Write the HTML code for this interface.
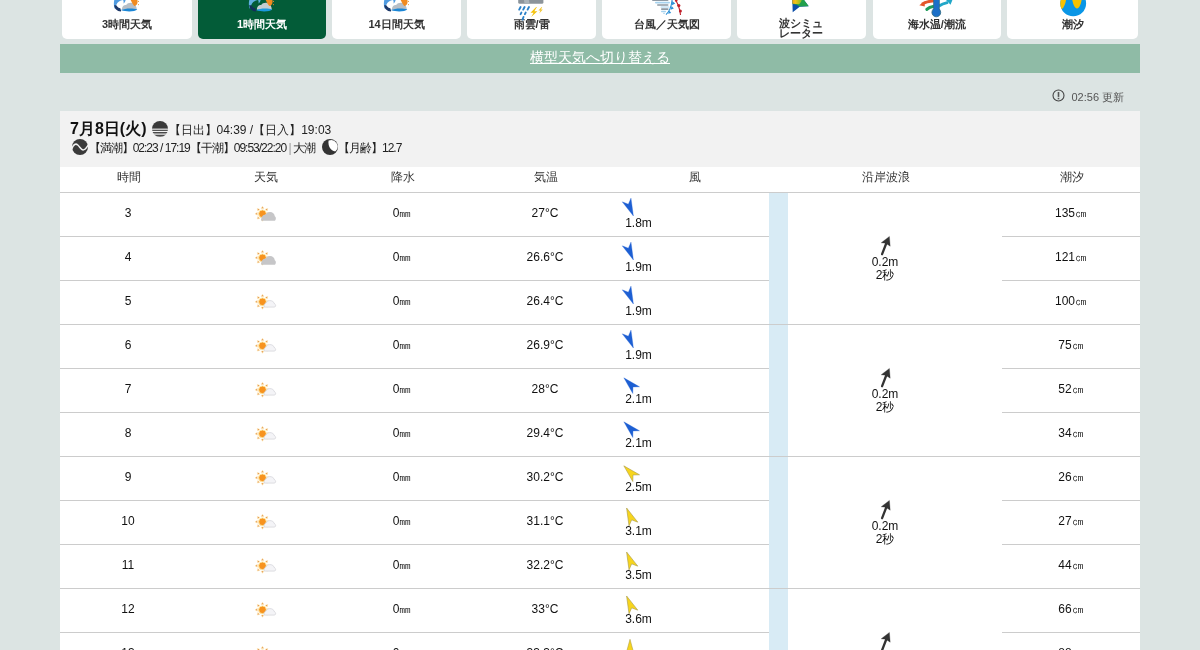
<!DOCTYPE html>
<html><head><meta charset="utf-8">
<style>
*{margin:0;padding:0;box-sizing:border-box}
html,body{width:1200px;height:650px;overflow:hidden;background:#dce4e3;font-family:"Liberation Sans",sans-serif;color:#222}
.abs{position:absolute}
#tabs{position:absolute;left:0;top:-20px;width:1200px;height:59px}
.tab{position:absolute;top:0;height:59px;background:#fff;border-radius:0 0 5px 5px;text-align:center}
.tab.on{background:#035c38}
.tab .lb{position:absolute;left:0;right:0;top:37px;font-size:11px;font-weight:bold;color:#333;line-height:14px}
.tab.on .lb{color:#fff}
#bar{position:absolute;left:60px;top:44px;width:1080px;height:29px;background:#8fbba6;text-align:center}
#bar a{color:#fff;font-size:14px;line-height:27.6px;text-decoration:underline;text-underline-offset:1px}
#upd{position:absolute;left:1071.5px;top:88.5px;font-size:11px;color:#555;line-height:16px;white-space:nowrap}
#panel{position:absolute;left:60px;top:111px;width:1080px;height:56px;background:#f2f2f2}
#tbl{position:absolute;left:60px;top:167px;width:1080px;height:500px;background:#fff}
.hd{position:absolute;height:20px;line-height:20px;font-size:12px;color:#333;text-align:center}
.hl{position:absolute;height:1px;background:#ccc}
.c{position:absolute;text-align:center;font-size:12px;color:#111;line-height:14px;white-space:nowrap}
.t1{font-size:12px;color:#222;line-height:16px;white-space:nowrap}
.t2{font-size:12px;color:#222;line-height:16px;white-space:nowrap;letter-spacing:-1px}
</style></head><body><div id="wrap" style="position:absolute;left:0;top:0;width:1200px;height:650px;overflow:hidden;will-change:transform">
<div id="tabs">
 <div class="tab" style="left:62px;width:130px"><div class="lb">3時間天気</div></div>
 <div class="tab on" style="left:198px;width:128px"><div class="lb">1時間天気</div></div>
 <div class="tab" style="left:332px;width:129px"><div class="lb">14日間天気</div></div>
 <div class="tab" style="left:467.25px;width:128.75px"><div class="lb">雨雲/雷</div></div>
 <div class="tab" style="left:602.25px;width:128.75px"><div class="lb">台風／天気図</div></div>
 <div class="tab" style="left:737.25px;width:128.75px"><div class="lb" style="line-height:10.5px;top:37.5px;left:-2px">波シミュ<br>レーター</div></div>
 <div class="tab" style="left:872.5px;width:128.5px"><div class="lb">海水温/潮流</div></div>
 <div class="tab" style="left:1007.25px;width:130.75px"><div class="lb">潮汐</div></div>
</div>

<svg class="abs" style="left:105px;top:0" width="36" height="13" viewBox="0 0 36 13">
 <path d="M9.5 -1 L20.8 -1 C20.5 1.5 19.5 3 18.5 3.5 C18.8 1.5 18.5 0.5 18 0 C15 0.5 12.5 2 11.5 4.5 C10.8 6 10.8 7 11.2 8 L9.6 8.5 C8.6 6 8.6 2.5 9.5 -1 Z" fill="#4f9be0"/>
 <path d="M9.3 5 C9.3 8.8 12 11.3 15.9 11.4 L16.2 9.6 C13.8 9.2 12 8 11.4 5.5 Z" fill="#1e3a6a"/>
 <path d="M10 6 C10.5 8.5 12.5 10 15 10.5 L15.5 8.2 C13.8 8 12.5 7.2 11.8 5.8 Z" fill="#1e3a6a"/>
 <path d="M17 9.8 C16.6 7 18.6 4.6 21.2 5 C22.2 3 25 2.4 27.5 2.9 C30 3.4 31.6 6 31.9 9.8 Z" fill="#b7bfc7"/>
 <path d="M25.2 -1 L32.5 -1 L32.5 2.8 C32.2 4.8 30.8 5.9 29.2 6 C28 4.2 26.5 2.2 25.2 -1 Z" fill="#f08a1f"/>
 <circle cx="33.4" cy="1.4" r="0.55" fill="#e8902a"/><circle cx="33.4" cy="4.6" r="0.55" fill="#e8902a"/>
 <path d="M16 10.1 C20 8.1 28 7.8 32.3 9.5 C30.2 11.6 22 12.4 16 10.1 Z" fill="#1b86d6"/>
</svg>
<svg class="abs" style="left:240px;top:0" width="36" height="13" viewBox="0 0 36 13">
 <path d="M9.5 -1 L20.8 -1 C20.5 1.5 19.5 3 18.5 3.5 C18.8 1.5 18.5 0.5 18 0 C15 0.5 12.5 2 11.5 4.5 C10.8 6 10.8 7 11.2 8 L9.6 8.5 C8.6 6 8.6 2.5 9.5 -1 Z" fill="#5fb0e0"/>
 <path d="M9.3 5 C9.3 8.8 12 11.3 15.9 11.4 L16.2 9.6 C13.8 9.2 12 8 11.4 5.5 Z" fill="#12305a"/>
 <path d="M10 6 C10.5 8.5 12.5 10 15 10.5 L15.5 8.2 C13.8 8 12.5 7.2 11.8 5.8 Z" fill="#12305a"/>
 <path d="M17 9.8 C16.6 7 18.6 4.6 21.2 5 C22.2 3 25 2.4 27.5 2.9 C30 3.4 31.6 6 31.9 9.8 Z" fill="#c4ccd0"/>
 <path d="M25.2 -1 L32.5 -1 L32.5 2.8 C32.2 4.8 30.8 5.9 29.2 6 C28 4.2 26.5 2.2 25.2 -1 Z" fill="#f08a1f"/>
 <circle cx="33.4" cy="1.4" r="0.55" fill="#e8902a"/><circle cx="33.4" cy="4.6" r="0.55" fill="#e8902a"/>
 <path d="M16 10.1 C20 8.1 28 7.8 32.3 9.5 C30.2 11.6 22 12.4 16 10.1 Z" fill="#1c9ae0"/>
</svg>
<svg class="abs" style="left:374.5px;top:0" width="36" height="13" viewBox="0 0 36 13">
 <path d="M9.5 -1 L20.8 -1 C20.5 1.5 19.5 3 18.5 3.5 C18.8 1.5 18.5 0.5 18 0 C15 0.5 12.5 2 11.5 4.5 C10.8 6 10.8 7 11.2 8 L9.6 8.5 C8.6 6 8.6 2.5 9.5 -1 Z" fill="#4f9be0"/>
 <path d="M9.3 5 C9.3 8.8 12 11.3 15.9 11.4 L16.2 9.6 C13.8 9.2 12 8 11.4 5.5 Z" fill="#1e3a6a"/>
 <path d="M10 6 C10.5 8.5 12.5 10 15 10.5 L15.5 8.2 C13.8 8 12.5 7.2 11.8 5.8 Z" fill="#1e3a6a"/>
 <path d="M17 9.8 C16.6 7 18.6 4.6 21.2 5 C22.2 3 25 2.4 27.5 2.9 C30 3.4 31.6 6 31.9 9.8 Z" fill="#b7bfc7"/>
 <path d="M25.2 -1 L32.5 -1 L32.5 2.8 C32.2 4.8 30.8 5.9 29.2 6 C28 4.2 26.5 2.2 25.2 -1 Z" fill="#f08a1f"/>
 <circle cx="33.4" cy="1.4" r="0.55" fill="#e8902a"/><circle cx="33.4" cy="4.6" r="0.55" fill="#e8902a"/>
 <path d="M16 10.1 C20 8.1 28 7.8 32.3 9.5 C30.2 11.6 22 12.4 16 10.1 Z" fill="#1b86d6"/>
</svg>
<svg class="abs" style="left:516px;top:0" width="30" height="21" viewBox="0 0 30 21">
 <rect x="2.2" y="-3" width="25.2" height="6.7" rx="1.5" fill="#8c949a"/>
 <path d="M7.5 -3 L12.5 -3 L13.5 3.7 L8.5 3.7Z" fill="#aab3b9"/>
 <g stroke="#2a80c8" stroke-width="1.9" stroke-linecap="round">
  <path d="M3.2 9.6 L4.6 7"/><path d="M7.2 9.6 L8.6 7"/><path d="M11.6 9.6 L13 7"/>
  <path d="M4.6 14.2 L5.4 12.6"/><path d="M8.9 14.2 L9.7 12.6"/><path d="M6.5 19.6 L7.5 17"/>
 </g>
 <path d="M20.2 7 L14.5 12.8 L17.6 12.8 L15.2 17 L21.4 11.2 L18.3 11.2 L20.9 7Z" fill="#f5c20a"/>
 <path d="M25.6 7 L22.4 10.6 L24.4 10.6 L23.2 13.4 L26.8 9.4 L25 9.4 L26.2 7Z" fill="#f0c430"/>
</svg>
<svg class="abs" style="left:650px;top:0" width="36" height="17" viewBox="0 0 36 17">
 <g fill="#8e99a3"><rect x="2" y="-1" width="16.5" height="2.1" rx="1"/><rect x="7" y="4.2" width="11.5" height="1.6" rx="0.8"/><rect x="11" y="8.3" width="7.5" height="1.7" rx="0.8"/></g>
 <g fill="#a6d2ee"><rect x="5" y="1.7" width="15" height="1.8" rx="0.9"/><rect x="10.5" y="6.4" width="9" height="1.2" rx="0.6"/><rect x="11" y="10.8" width="5" height="1.5" rx="0.7"/><rect x="13" y="12.8" width="2" height="1" rx="0.5"/></g>
 <path d="M16 14.6 C19 12 21.5 7 22.2 -1" stroke="#2a8fd6" stroke-width="1.1" fill="none"/>
 <g fill="#2a8fd6"><path d="M22.2 1 L25.2 3.4 L22 5.2Z"/><path d="M21.6 6 L23.8 8.4 L20.6 9.8Z"/><path d="M19.5 10.8 L21.2 13 L18 13.8Z"/></g>
 <path d="M25 -1 C27.5 3 30 9 30.5 15" stroke="#c0202a" stroke-width="1.1" fill="none"/>
 <g fill="#c0202a"><circle cx="28.8" cy="5.6" r="1.6"/><circle cx="30.4" cy="11" r="1.5"/><circle cx="26.2" cy="0.5" r="1.3"/></g>
</svg>

<svg class="abs" style="left:790px;top:0" width="22" height="15" viewBox="0 0 22 15">
 <defs><linearGradient id="wg" x1="0" y1="0" x2="1" y2="0"><stop offset="0" stop-color="#f0821e"/><stop offset="0.45" stop-color="#f2c416"/><stop offset="1" stop-color="#7cba2a"/></linearGradient>
 <clipPath id="wc"><path d="M2.3 -1 L13.3 -1 L18.7 6.3 L9.7 6.7 L2.7 12.3 Z"/></clipPath></defs>
 <g clip-path="url(#wc)">
  <rect x="0" y="-2" width="22" height="16" fill="#0c4ea8"/>
  <path d="M0 -2 L22 -2 L22 6.5 L9.7 6.7 C7 4.5 4 4 0 4 Z" fill="#22a04c"/>
  <path d="M0 -2 L12 -2 C12 1 10.5 3 9 4.2 C6 3.6 3 3.5 0 3.8 Z" fill="url(#wg)"/>
 </g>
</svg>
<svg class="abs" style="left:910px;top:0" width="46" height="18" viewBox="0 0 46 18">
 <path d="M12 4.2 C15 2.2 19 1.2 24 0.8" stroke="#e4562a" stroke-width="3" fill="none"/>
 <path d="M9.3 5.2 L14.5 1.2 L14.8 6.6 Z" fill="#e4562a"/>
 <path d="M16.8 9.4 C18.5 7.6 21 6.6 24 6.2" stroke="#1e9c5a" stroke-width="3" fill="none" stroke-linecap="round"/>
 <path d="M29 6 C32 4 35 3.2 38 2.4" stroke="#22a7c8" stroke-width="3" fill="none"/>
 <path d="M42.6 -0.5 L40.5 4.8 L36 0 Z" fill="#22a7c8"/>
 <rect x="23.6" y="-3" width="5.8" height="14" rx="2.5" fill="#1b6fc8" stroke="#2e6a80" stroke-width="0.7"/>
 <circle cx="26.3" cy="12.4" r="4.4" fill="#1b6fc8" stroke="#2e6a80" stroke-width="0.8"/>
 <rect x="24.4" y="-3" width="4.2" height="13" fill="#1b6fc8"/>
</svg>
<svg class="abs" style="left:1058px;top:0" width="30" height="18" viewBox="0 0 30 18">
 <defs><clipPath id="tc"><circle cx="15.2" cy="3.4" r="12.9"/></clipPath></defs>
 <g clip-path="url(#tc)">
  <rect x="0" y="-10" width="30" height="30" fill="#0a96e6"/>
  <path d="M0 -2 L8.5 -2 C7.5 3 6.5 7 4 9 L0 9Z" fill="#f6c200"/>
  <path d="M13.8 -2 L24 -2 C23 4 21.5 8.5 19 8.5 C16.5 8.5 15 4 13.8 -2Z" fill="#f6c200"/>
 </g>
</svg>
<div id="bar"><a>横型天気へ切り替える</a></div>
<svg class="abs" style="left:1051.5px;top:88.5px" width="13" height="13" viewBox="0 0 13 13"><circle cx="6.5" cy="6.5" r="5.5" fill="none" stroke="#444" stroke-width="1.1"/><rect x="5.7" y="3" width="1.6" height="4.9" fill="#555"/><rect x="5.7" y="8.8" width="1.6" height="1.5" fill="#555"/></svg><div id="upd">02:56 更新</div>
<div id="panel">
 <div class="abs" style="left:10px;top:7.8px;font-size:16px;font-weight:bold;color:#111;line-height:20px">7月8日(火)</div>
 <svg class="abs" style="left:92px;top:10.2px" width="16" height="16" viewBox="0 0 16 16"><defs><clipPath id="sc"><circle cx="8" cy="8" r="8"/></clipPath></defs><g clip-path="url(#sc)" fill="#3a3a3a"><rect x="0" y="0" width="16" height="7.6"/><rect x="0" y="8.7" width="16" height="1.3" fill="#555"/><rect x="0" y="11" width="16" height="1.5" fill="#4a4a4a"/><rect x="0" y="13.7" width="16" height="2" fill="#4a4a4a"/></g></svg>
 <div class="abs t1" style="left:108.5px;top:10.5px">【日出】04:39 /【日入】19:03</div>
 <svg class="abs" style="left:12px;top:27.8px" width="16" height="16" viewBox="0 0 16 16"><circle cx="8" cy="8" r="8" fill="#3a3a3a"/><path d="M-0.5 10.5 C1.5 5 3.8 4.2 5.8 6 C7.8 7.8 9 10.8 11 10.9 C13 11 14.5 9 16.5 5.6" stroke="#f2f2f2" stroke-width="1.5" fill="none"/></svg>
 <div class="abs t2" style="left:28.7px;top:29.2px">【満潮】02:23 / 17:19【干潮】09:53/22:20 <span style="color:#999">|</span> 大潮</div>
 <svg class="abs" style="left:262px;top:27.5px" width="16" height="16" viewBox="0 0 16 16"><circle cx="8" cy="8" r="8" fill="#333"/><path d="M6.6 1.45 A6.6 6.6 0 0 1 13.6 12.3 C10 12.4 5.6 8.8 6.6 1.45 Z" fill="#fff"/></svg>
 <div class="abs t2" style="left:278px;top:29.2px">【月齢】12.7</div>
</div>
<div id="tbl"></div>
<div class="hd" style="left:78.5px;width:100px;top:166.7px">時間</div>
<div class="hd" style="left:215.5px;width:100px;top:166.7px">天気</div>
<div class="hd" style="left:352.5px;width:100px;top:166.7px">降水</div>
<div class="hd" style="left:495.5px;width:100px;top:166.7px">気温</div>
<div class="hd" style="left:644.5px;width:100px;top:166.7px">風</div>
<div class="hd" style="left:835.5px;width:100px;top:166.7px">沿岸波浪</div>
<div class="hd" style="left:1021.5px;width:100px;top:166.7px">潮汐</div>
<div class="abs" style="left:769px;top:192px;width:19px;height:458px;background:#d8ebf5"></div>
<div class="hl" style="left:60px;width:1080px;top:192px"></div>
<div class="hl" style="left:60px;width:709px;top:236px"></div>
<div class="hl" style="left:769px;width:19px;top:236px;background:transparent"></div>
<div class="hl" style="left:1002px;width:138px;top:236px"></div>
<div class="c" style="left:88px;width:80px;top:206px">3</div>
<svg class="abs" style="left:252px;top:202px" width="28" height="24" viewBox="0 0 28 24"><g fill="#e0883a" stroke="#ffeec0" stroke-width="0.6" stroke-linejoin="round"><path d="M10.50 4.30 L11.85 6.60 L9.15 6.60Z"/><path d="M15.80 6.50 L15.13 9.08 L13.22 7.17Z"/><path d="M5.20 6.50 L7.78 7.17 L5.87 9.08Z"/><path d="M3.00 11.80 L5.30 10.45 L5.30 13.15Z"/><path d="M5.20 17.10 L5.87 14.52 L7.78 16.43Z"/><path d="M10.50 19.30 L9.15 17.00 L11.85 17.00Z"/><path d="M18.00 11.80 L15.70 13.15 L15.70 10.45Z"/><path d="M15.80 17.10 L13.22 16.43 L15.13 14.52Z"/></g><circle cx="10.5" cy="11.8" r="3.9" fill="#f7931e" stroke="#ffe8a0" stroke-width="1"/><path d="M9.2 18.8 L22.2 18.8 C24.2 18.8 24.4 15 22.8 14.2 C22.6 11.5 20.5 9.8 17.8 9.9 C15.6 10 14.2 11.2 13.4 12.6 C11 12.8 9 15 9.2 18.8 Z" fill="#c6c6c8"/></svg>
<div class="c" style="left:362px;width:80px;top:206px">0㎜</div>
<div class="c" style="left:505px;width:80px;top:206px">27°C</div>
<svg class="abs" style="left:618.9px;top:196.6px" width="22" height="22" viewBox="-11 -11 22 22"><path d="M0 -8.7 L4.75 8.7 L0 4.2 L-4.75 8.7 Z" transform="rotate(157)" fill="#1d5fd3" stroke="#1d5fd3" stroke-width="0.3" stroke-linejoin="round"/></svg>
<div class="c" style="left:619.5px;width:38px;top:215.8px">1.8m</div>
<div class="c" style="left:1031px;width:80px;top:206px">135㎝</div>
<div class="hl" style="left:60px;width:709px;top:280px"></div>
<div class="hl" style="left:769px;width:19px;top:280px;background:transparent"></div>
<div class="hl" style="left:1002px;width:138px;top:280px"></div>
<div class="c" style="left:88px;width:80px;top:250px">4</div>
<svg class="abs" style="left:252px;top:246px" width="28" height="24" viewBox="0 0 28 24"><g fill="#e0883a" stroke="#ffeec0" stroke-width="0.6" stroke-linejoin="round"><path d="M10.50 4.30 L11.85 6.60 L9.15 6.60Z"/><path d="M15.80 6.50 L15.13 9.08 L13.22 7.17Z"/><path d="M5.20 6.50 L7.78 7.17 L5.87 9.08Z"/><path d="M3.00 11.80 L5.30 10.45 L5.30 13.15Z"/><path d="M5.20 17.10 L5.87 14.52 L7.78 16.43Z"/><path d="M10.50 19.30 L9.15 17.00 L11.85 17.00Z"/><path d="M18.00 11.80 L15.70 13.15 L15.70 10.45Z"/><path d="M15.80 17.10 L13.22 16.43 L15.13 14.52Z"/></g><circle cx="10.5" cy="11.8" r="3.9" fill="#f7931e" stroke="#ffe8a0" stroke-width="1"/><path d="M9.2 18.8 L22.2 18.8 C24.2 18.8 24.4 15 22.8 14.2 C22.6 11.5 20.5 9.8 17.8 9.9 C15.6 10 14.2 11.2 13.4 12.6 C11 12.8 9 15 9.2 18.8 Z" fill="#c6c6c8"/></svg>
<div class="c" style="left:362px;width:80px;top:250px">0㎜</div>
<div class="c" style="left:505px;width:80px;top:250px">26.6°C</div>
<svg class="abs" style="left:618.9px;top:240.6px" width="22" height="22" viewBox="-11 -11 22 22"><path d="M0 -8.7 L4.75 8.7 L0 4.2 L-4.75 8.7 Z" transform="rotate(157)" fill="#1d5fd3" stroke="#1d5fd3" stroke-width="0.3" stroke-linejoin="round"/></svg>
<div class="c" style="left:619.5px;width:38px;top:259.8px">1.9m</div>
<div class="c" style="left:1031px;width:80px;top:250px">121㎝</div>
<div class="hl" style="left:60px;width:1080px;top:324px"></div>
<div class="c" style="left:88px;width:80px;top:294px">5</div>
<svg class="abs" style="left:252px;top:290px" width="28" height="24" viewBox="0 0 28 24"><g fill="#e0883a" stroke="#ffeec0" stroke-width="0.6" stroke-linejoin="round"><path d="M10.50 4.30 L11.85 6.60 L9.15 6.60Z"/><path d="M15.80 6.50 L15.13 9.08 L13.22 7.17Z"/><path d="M5.20 6.50 L7.78 7.17 L5.87 9.08Z"/><path d="M3.00 11.80 L5.30 10.45 L5.30 13.15Z"/><path d="M5.20 17.10 L5.87 14.52 L7.78 16.43Z"/><path d="M10.50 19.30 L9.15 17.00 L11.85 17.00Z"/><path d="M18.00 11.80 L15.70 13.15 L15.70 10.45Z"/><path d="M15.80 17.10 L13.22 16.43 L15.13 14.52Z"/></g><circle cx="10.5" cy="11.8" r="3.9" fill="#f7931e" stroke="#ffe8a0" stroke-width="1"/><path d="M12.2 17.1 L22.2 17.1 C24 17.1 24.2 14.5 22.6 14 C22 11.9 20 10.5 17.8 10.6 C15.8 10.7 14.6 11.7 14 13 C12.5 13.4 11.8 15 12.2 17.1 Z" fill="#f4f4f7" stroke="#cdcdd3" stroke-width="0.65"/></svg>
<div class="c" style="left:362px;width:80px;top:294px">0㎜</div>
<div class="c" style="left:505px;width:80px;top:294px">26.4°C</div>
<svg class="abs" style="left:618.9px;top:284.6px" width="22" height="22" viewBox="-11 -11 22 22"><path d="M0 -8.7 L4.75 8.7 L0 4.2 L-4.75 8.7 Z" transform="rotate(157)" fill="#1d5fd3" stroke="#1d5fd3" stroke-width="0.3" stroke-linejoin="round"/></svg>
<div class="c" style="left:619.5px;width:38px;top:303.8px">1.9m</div>
<div class="c" style="left:1031px;width:80px;top:294px">100㎝</div>
<div class="hl" style="left:60px;width:709px;top:368px"></div>
<div class="hl" style="left:769px;width:19px;top:368px;background:transparent"></div>
<div class="hl" style="left:1002px;width:138px;top:368px"></div>
<div class="c" style="left:88px;width:80px;top:338px">6</div>
<svg class="abs" style="left:252px;top:334px" width="28" height="24" viewBox="0 0 28 24"><g fill="#e0883a" stroke="#ffeec0" stroke-width="0.6" stroke-linejoin="round"><path d="M10.50 4.30 L11.85 6.60 L9.15 6.60Z"/><path d="M15.80 6.50 L15.13 9.08 L13.22 7.17Z"/><path d="M5.20 6.50 L7.78 7.17 L5.87 9.08Z"/><path d="M3.00 11.80 L5.30 10.45 L5.30 13.15Z"/><path d="M5.20 17.10 L5.87 14.52 L7.78 16.43Z"/><path d="M10.50 19.30 L9.15 17.00 L11.85 17.00Z"/><path d="M18.00 11.80 L15.70 13.15 L15.70 10.45Z"/><path d="M15.80 17.10 L13.22 16.43 L15.13 14.52Z"/></g><circle cx="10.5" cy="11.8" r="3.9" fill="#f7931e" stroke="#ffe8a0" stroke-width="1"/><path d="M12.2 17.1 L22.2 17.1 C24 17.1 24.2 14.5 22.6 14 C22 11.9 20 10.5 17.8 10.6 C15.8 10.7 14.6 11.7 14 13 C12.5 13.4 11.8 15 12.2 17.1 Z" fill="#f4f4f7" stroke="#cdcdd3" stroke-width="0.65"/></svg>
<div class="c" style="left:362px;width:80px;top:338px">0㎜</div>
<div class="c" style="left:505px;width:80px;top:338px">26.9°C</div>
<svg class="abs" style="left:618.9px;top:328.6px" width="22" height="22" viewBox="-11 -11 22 22"><path d="M0 -8.7 L4.75 8.7 L0 4.2 L-4.75 8.7 Z" transform="rotate(157)" fill="#1d5fd3" stroke="#1d5fd3" stroke-width="0.3" stroke-linejoin="round"/></svg>
<div class="c" style="left:619.5px;width:38px;top:347.8px">1.9m</div>
<div class="c" style="left:1031px;width:80px;top:338px">75㎝</div>
<div class="hl" style="left:60px;width:709px;top:412px"></div>
<div class="hl" style="left:769px;width:19px;top:412px;background:transparent"></div>
<div class="hl" style="left:1002px;width:138px;top:412px"></div>
<div class="c" style="left:88px;width:80px;top:382px">7</div>
<svg class="abs" style="left:252px;top:378px" width="28" height="24" viewBox="0 0 28 24"><g fill="#e0883a" stroke="#ffeec0" stroke-width="0.6" stroke-linejoin="round"><path d="M10.50 4.30 L11.85 6.60 L9.15 6.60Z"/><path d="M15.80 6.50 L15.13 9.08 L13.22 7.17Z"/><path d="M5.20 6.50 L7.78 7.17 L5.87 9.08Z"/><path d="M3.00 11.80 L5.30 10.45 L5.30 13.15Z"/><path d="M5.20 17.10 L5.87 14.52 L7.78 16.43Z"/><path d="M10.50 19.30 L9.15 17.00 L11.85 17.00Z"/><path d="M18.00 11.80 L15.70 13.15 L15.70 10.45Z"/><path d="M15.80 17.10 L13.22 16.43 L15.13 14.52Z"/></g><circle cx="10.5" cy="11.8" r="3.9" fill="#f7931e" stroke="#ffe8a0" stroke-width="1"/><path d="M12.2 17.1 L22.2 17.1 C24 17.1 24.2 14.5 22.6 14 C22 11.9 20 10.5 17.8 10.6 C15.8 10.7 14.6 11.7 14 13 C12.5 13.4 11.8 15 12.2 17.1 Z" fill="#f4f4f7" stroke="#cdcdd3" stroke-width="0.65"/></svg>
<div class="c" style="left:362px;width:80px;top:382px">0㎜</div>
<div class="c" style="left:505px;width:80px;top:382px">28°C</div>
<svg class="abs" style="left:618.9px;top:372.6px" width="22" height="22" viewBox="-11 -11 22 22"><path d="M0 -8.7 L4.75 8.7 L0 4.2 L-4.75 8.7 Z" transform="rotate(-45)" fill="#1d5fd3" stroke="#1d5fd3" stroke-width="0.3" stroke-linejoin="round"/></svg>
<div class="c" style="left:619.5px;width:38px;top:391.8px">2.1m</div>
<div class="c" style="left:1031px;width:80px;top:382px">52㎝</div>
<div class="hl" style="left:60px;width:1080px;top:456px"></div>
<div class="c" style="left:88px;width:80px;top:426px">8</div>
<svg class="abs" style="left:252px;top:422px" width="28" height="24" viewBox="0 0 28 24"><g fill="#e0883a" stroke="#ffeec0" stroke-width="0.6" stroke-linejoin="round"><path d="M10.50 4.30 L11.85 6.60 L9.15 6.60Z"/><path d="M15.80 6.50 L15.13 9.08 L13.22 7.17Z"/><path d="M5.20 6.50 L7.78 7.17 L5.87 9.08Z"/><path d="M3.00 11.80 L5.30 10.45 L5.30 13.15Z"/><path d="M5.20 17.10 L5.87 14.52 L7.78 16.43Z"/><path d="M10.50 19.30 L9.15 17.00 L11.85 17.00Z"/><path d="M18.00 11.80 L15.70 13.15 L15.70 10.45Z"/><path d="M15.80 17.10 L13.22 16.43 L15.13 14.52Z"/></g><circle cx="10.5" cy="11.8" r="3.9" fill="#f7931e" stroke="#ffe8a0" stroke-width="1"/><path d="M12.2 17.1 L22.2 17.1 C24 17.1 24.2 14.5 22.6 14 C22 11.9 20 10.5 17.8 10.6 C15.8 10.7 14.6 11.7 14 13 C12.5 13.4 11.8 15 12.2 17.1 Z" fill="#f4f4f7" stroke="#cdcdd3" stroke-width="0.65"/></svg>
<div class="c" style="left:362px;width:80px;top:426px">0㎜</div>
<div class="c" style="left:505px;width:80px;top:426px">29.4°C</div>
<svg class="abs" style="left:618.9px;top:416.6px" width="22" height="22" viewBox="-11 -11 22 22"><path d="M0 -8.7 L4.75 8.7 L0 4.2 L-4.75 8.7 Z" transform="rotate(-45)" fill="#1d5fd3" stroke="#1d5fd3" stroke-width="0.3" stroke-linejoin="round"/></svg>
<div class="c" style="left:619.5px;width:38px;top:435.8px">2.1m</div>
<div class="c" style="left:1031px;width:80px;top:426px">34㎝</div>
<div class="hl" style="left:60px;width:709px;top:500px"></div>
<div class="hl" style="left:769px;width:19px;top:500px;background:transparent"></div>
<div class="hl" style="left:1002px;width:138px;top:500px"></div>
<div class="c" style="left:88px;width:80px;top:470px">9</div>
<svg class="abs" style="left:252px;top:466px" width="28" height="24" viewBox="0 0 28 24"><g fill="#e0883a" stroke="#ffeec0" stroke-width="0.6" stroke-linejoin="round"><path d="M10.50 4.30 L11.85 6.60 L9.15 6.60Z"/><path d="M15.80 6.50 L15.13 9.08 L13.22 7.17Z"/><path d="M5.20 6.50 L7.78 7.17 L5.87 9.08Z"/><path d="M3.00 11.80 L5.30 10.45 L5.30 13.15Z"/><path d="M5.20 17.10 L5.87 14.52 L7.78 16.43Z"/><path d="M10.50 19.30 L9.15 17.00 L11.85 17.00Z"/><path d="M18.00 11.80 L15.70 13.15 L15.70 10.45Z"/><path d="M15.80 17.10 L13.22 16.43 L15.13 14.52Z"/></g><circle cx="10.5" cy="11.8" r="3.9" fill="#f7931e" stroke="#ffe8a0" stroke-width="1"/><path d="M12.2 17.1 L22.2 17.1 C24 17.1 24.2 14.5 22.6 14 C22 11.9 20 10.5 17.8 10.6 C15.8 10.7 14.6 11.7 14 13 C12.5 13.4 11.8 15 12.2 17.1 Z" fill="#f4f4f7" stroke="#cdcdd3" stroke-width="0.65"/></svg>
<div class="c" style="left:362px;width:80px;top:470px">0㎜</div>
<div class="c" style="left:505px;width:80px;top:470px">30.2°C</div>
<svg class="abs" style="left:618.9px;top:460.6px" width="22" height="22" viewBox="-11 -11 22 22"><path d="M0 -8.7 L4.75 8.7 L0 4.2 L-4.75 8.7 Z" transform="rotate(-45)" fill="#f7d51d" stroke="#a89a48" stroke-width="0.55" stroke-linejoin="round"/></svg>
<div class="c" style="left:619.5px;width:38px;top:479.8px">2.5m</div>
<div class="c" style="left:1031px;width:80px;top:470px">26㎝</div>
<div class="hl" style="left:60px;width:709px;top:544px"></div>
<div class="hl" style="left:769px;width:19px;top:544px;background:transparent"></div>
<div class="hl" style="left:1002px;width:138px;top:544px"></div>
<div class="c" style="left:88px;width:80px;top:514px">10</div>
<svg class="abs" style="left:252px;top:510px" width="28" height="24" viewBox="0 0 28 24"><g fill="#e0883a" stroke="#ffeec0" stroke-width="0.6" stroke-linejoin="round"><path d="M10.50 4.30 L11.85 6.60 L9.15 6.60Z"/><path d="M15.80 6.50 L15.13 9.08 L13.22 7.17Z"/><path d="M5.20 6.50 L7.78 7.17 L5.87 9.08Z"/><path d="M3.00 11.80 L5.30 10.45 L5.30 13.15Z"/><path d="M5.20 17.10 L5.87 14.52 L7.78 16.43Z"/><path d="M10.50 19.30 L9.15 17.00 L11.85 17.00Z"/><path d="M18.00 11.80 L15.70 13.15 L15.70 10.45Z"/><path d="M15.80 17.10 L13.22 16.43 L15.13 14.52Z"/></g><circle cx="10.5" cy="11.8" r="3.9" fill="#f7931e" stroke="#ffe8a0" stroke-width="1"/><path d="M12.2 17.1 L22.2 17.1 C24 17.1 24.2 14.5 22.6 14 C22 11.9 20 10.5 17.8 10.6 C15.8 10.7 14.6 11.7 14 13 C12.5 13.4 11.8 15 12.2 17.1 Z" fill="#f4f4f7" stroke="#cdcdd3" stroke-width="0.65"/></svg>
<div class="c" style="left:362px;width:80px;top:514px">0㎜</div>
<div class="c" style="left:505px;width:80px;top:514px">31.1°C</div>
<svg class="abs" style="left:618.9px;top:504.6px" width="22" height="22" viewBox="-11 -11 22 22"><path d="M0 -8.7 L4.75 8.7 L0 4.2 L-4.75 8.7 Z" transform="rotate(-23)" fill="#f7d51d" stroke="#a89a48" stroke-width="0.55" stroke-linejoin="round"/></svg>
<div class="c" style="left:619.5px;width:38px;top:523.8px">3.1m</div>
<div class="c" style="left:1031px;width:80px;top:514px">27㎝</div>
<div class="hl" style="left:60px;width:1080px;top:588px"></div>
<div class="c" style="left:88px;width:80px;top:558px">11</div>
<svg class="abs" style="left:252px;top:554px" width="28" height="24" viewBox="0 0 28 24"><g fill="#e0883a" stroke="#ffeec0" stroke-width="0.6" stroke-linejoin="round"><path d="M10.50 4.30 L11.85 6.60 L9.15 6.60Z"/><path d="M15.80 6.50 L15.13 9.08 L13.22 7.17Z"/><path d="M5.20 6.50 L7.78 7.17 L5.87 9.08Z"/><path d="M3.00 11.80 L5.30 10.45 L5.30 13.15Z"/><path d="M5.20 17.10 L5.87 14.52 L7.78 16.43Z"/><path d="M10.50 19.30 L9.15 17.00 L11.85 17.00Z"/><path d="M18.00 11.80 L15.70 13.15 L15.70 10.45Z"/><path d="M15.80 17.10 L13.22 16.43 L15.13 14.52Z"/></g><circle cx="10.5" cy="11.8" r="3.9" fill="#f7931e" stroke="#ffe8a0" stroke-width="1"/><path d="M12.2 17.1 L22.2 17.1 C24 17.1 24.2 14.5 22.6 14 C22 11.9 20 10.5 17.8 10.6 C15.8 10.7 14.6 11.7 14 13 C12.5 13.4 11.8 15 12.2 17.1 Z" fill="#f4f4f7" stroke="#cdcdd3" stroke-width="0.65"/></svg>
<div class="c" style="left:362px;width:80px;top:558px">0㎜</div>
<div class="c" style="left:505px;width:80px;top:558px">32.2°C</div>
<svg class="abs" style="left:618.9px;top:548.6px" width="22" height="22" viewBox="-11 -11 22 22"><path d="M0 -8.7 L4.75 8.7 L0 4.2 L-4.75 8.7 Z" transform="rotate(-23)" fill="#f7d51d" stroke="#a89a48" stroke-width="0.55" stroke-linejoin="round"/></svg>
<div class="c" style="left:619.5px;width:38px;top:567.8px">3.5m</div>
<div class="c" style="left:1031px;width:80px;top:558px">44㎝</div>
<div class="hl" style="left:60px;width:709px;top:632px"></div>
<div class="hl" style="left:769px;width:19px;top:632px;background:transparent"></div>
<div class="hl" style="left:1002px;width:138px;top:632px"></div>
<div class="c" style="left:88px;width:80px;top:602px">12</div>
<svg class="abs" style="left:252px;top:598px" width="28" height="24" viewBox="0 0 28 24"><g fill="#e0883a" stroke="#ffeec0" stroke-width="0.6" stroke-linejoin="round"><path d="M10.50 4.30 L11.85 6.60 L9.15 6.60Z"/><path d="M15.80 6.50 L15.13 9.08 L13.22 7.17Z"/><path d="M5.20 6.50 L7.78 7.17 L5.87 9.08Z"/><path d="M3.00 11.80 L5.30 10.45 L5.30 13.15Z"/><path d="M5.20 17.10 L5.87 14.52 L7.78 16.43Z"/><path d="M10.50 19.30 L9.15 17.00 L11.85 17.00Z"/><path d="M18.00 11.80 L15.70 13.15 L15.70 10.45Z"/><path d="M15.80 17.10 L13.22 16.43 L15.13 14.52Z"/></g><circle cx="10.5" cy="11.8" r="3.9" fill="#f7931e" stroke="#ffe8a0" stroke-width="1"/><path d="M12.2 17.1 L22.2 17.1 C24 17.1 24.2 14.5 22.6 14 C22 11.9 20 10.5 17.8 10.6 C15.8 10.7 14.6 11.7 14 13 C12.5 13.4 11.8 15 12.2 17.1 Z" fill="#f4f4f7" stroke="#cdcdd3" stroke-width="0.65"/></svg>
<div class="c" style="left:362px;width:80px;top:602px">0㎜</div>
<div class="c" style="left:505px;width:80px;top:602px">33°C</div>
<svg class="abs" style="left:618.9px;top:592.6px" width="22" height="22" viewBox="-11 -11 22 22"><path d="M0 -8.7 L4.75 8.7 L0 4.2 L-4.75 8.7 Z" transform="rotate(-23)" fill="#f7d51d" stroke="#a89a48" stroke-width="0.55" stroke-linejoin="round"/></svg>
<div class="c" style="left:619.5px;width:38px;top:611.8px">3.6m</div>
<div class="c" style="left:1031px;width:80px;top:602px">66㎝</div>
<div class="hl" style="left:60px;width:709px;top:676px"></div>
<div class="hl" style="left:769px;width:19px;top:676px;background:transparent"></div>
<div class="hl" style="left:1002px;width:138px;top:676px"></div>
<div class="c" style="left:88px;width:80px;top:646px">13</div>
<svg class="abs" style="left:252px;top:642px" width="28" height="24" viewBox="0 0 28 24"><g fill="#e0883a" stroke="#ffeec0" stroke-width="0.6" stroke-linejoin="round"><path d="M10.50 4.30 L11.85 6.60 L9.15 6.60Z"/><path d="M15.80 6.50 L15.13 9.08 L13.22 7.17Z"/><path d="M5.20 6.50 L7.78 7.17 L5.87 9.08Z"/><path d="M3.00 11.80 L5.30 10.45 L5.30 13.15Z"/><path d="M5.20 17.10 L5.87 14.52 L7.78 16.43Z"/><path d="M10.50 19.30 L9.15 17.00 L11.85 17.00Z"/><path d="M18.00 11.80 L15.70 13.15 L15.70 10.45Z"/><path d="M15.80 17.10 L13.22 16.43 L15.13 14.52Z"/></g><circle cx="10.5" cy="11.8" r="3.9" fill="#f7931e" stroke="#ffe8a0" stroke-width="1"/><path d="M12.2 17.1 L22.2 17.1 C24 17.1 24.2 14.5 22.6 14 C22 11.9 20 10.5 17.8 10.6 C15.8 10.7 14.6 11.7 14 13 C12.5 13.4 11.8 15 12.2 17.1 Z" fill="#f4f4f7" stroke="#cdcdd3" stroke-width="0.65"/></svg>
<div class="c" style="left:362px;width:80px;top:646px">0㎜</div>
<div class="c" style="left:505px;width:80px;top:646px">33.3°C</div>
<svg class="abs" style="left:618.9px;top:636.6px" width="22" height="22" viewBox="-11 -11 22 22"><path d="M0 -8.7 L4.75 8.7 L0 4.2 L-4.75 8.7 Z" transform="rotate(0)" fill="#f7d51d" stroke="#a89a48" stroke-width="0.55" stroke-linejoin="round"/></svg>
<div class="c" style="left:619.5px;width:38px;top:655.8px">3.7m</div>
<div class="c" style="left:1031px;width:80px;top:646px">88㎝</div>
<svg class="abs" style="left:870px;top:232px" width="30" height="28" viewBox="870 232 30 28"><path d="M882.1 254.2 L886.4 243" stroke="#333" stroke-width="2.3" stroke-linecap="round"/><path d="M889.4 236.4 L881.2 242.8 L885.6 243.2 L890.2 246.2 Z" fill="#333" stroke="#333" stroke-width="0.3" stroke-linejoin="round"/></svg>
<div class="c" style="left:845px;width:80px;top:256px;line-height:12.8px">0.2m<br>2秒</div>
<svg class="abs" style="left:870px;top:364px" width="30" height="28" viewBox="870 364 30 28"><path d="M882.1 386.2 L886.4 375" stroke="#333" stroke-width="2.3" stroke-linecap="round"/><path d="M889.4 368.4 L881.2 374.8 L885.6 375.2 L890.2 378.2 Z" fill="#333" stroke="#333" stroke-width="0.3" stroke-linejoin="round"/></svg>
<div class="c" style="left:845px;width:80px;top:388px;line-height:12.8px">0.2m<br>2秒</div>
<svg class="abs" style="left:870px;top:496px" width="30" height="28" viewBox="870 496 30 28"><path d="M882.1 518.2 L886.4 507" stroke="#333" stroke-width="2.3" stroke-linecap="round"/><path d="M889.4 500.4 L881.2 506.8 L885.6 507.2 L890.2 510.2 Z" fill="#333" stroke="#333" stroke-width="0.3" stroke-linejoin="round"/></svg>
<div class="c" style="left:845px;width:80px;top:520px;line-height:12.8px">0.2m<br>2秒</div>
<svg class="abs" style="left:870px;top:628px" width="30" height="28" viewBox="870 628 30 28"><path d="M882.1 650.2 L886.4 639" stroke="#333" stroke-width="2.3" stroke-linecap="round"/><path d="M889.4 632.4 L881.2 638.8 L885.6 639.2 L890.2 642.2 Z" fill="#333" stroke="#333" stroke-width="0.3" stroke-linejoin="round"/></svg>
<div class="c" style="left:845px;width:80px;top:652px;line-height:12.8px">0.2m<br>2秒</div>
</div></body></html>
